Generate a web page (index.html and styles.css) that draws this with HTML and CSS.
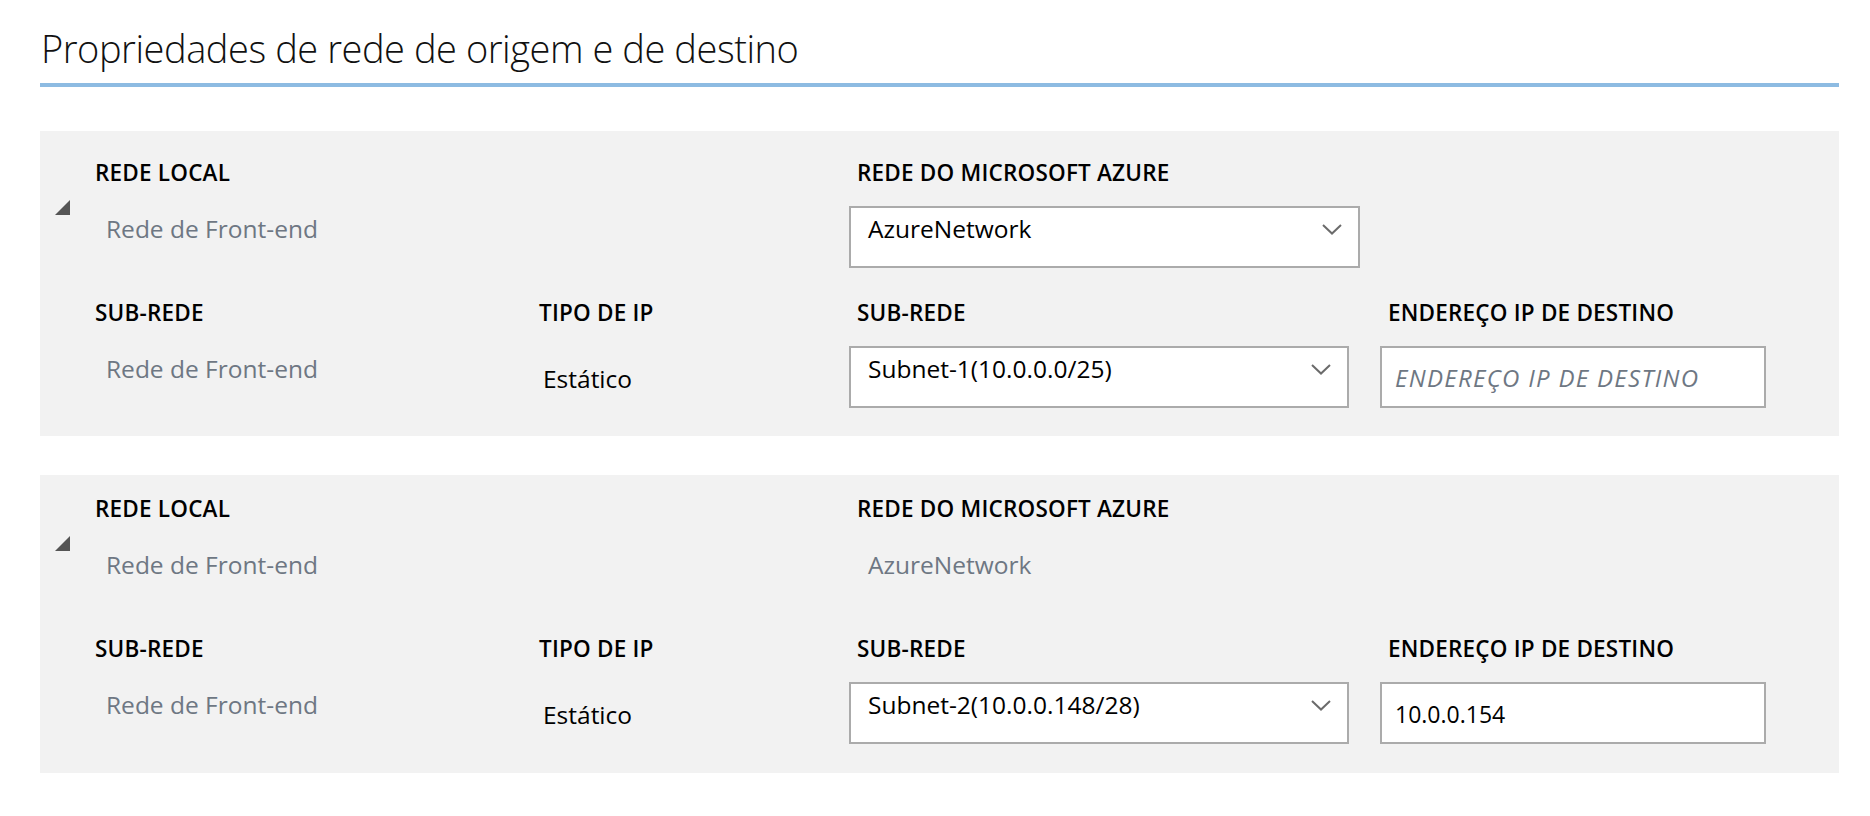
FILE: index.html
```html
<!DOCTYPE html>
<html lang="pt">
<head>
<meta charset="utf-8">
<title>Propriedades de rede</title>
<link rel="stylesheet" href="styles.css">
</head>
<body>
<div class="page">
  <h1 class="title">Propriedades de rede de origem e de destino</h1>
  <div class="rule"></div>

  <section class="panel panel-first">
    <div class="group">
      <div class="toggle"></div>
      <div class="label c1">REDE LOCAL</div>
      <div class="label c3 ind">REDE DO MICROSOFT AZURE</div>
      <div class="value c1 r2">Rede de Front-end</div>
      <div class="select wide c3 r2"><span>AzureNetwork</span><svg class="chev" width="20" height="11" viewBox="0 0 20 11"><polyline points="1,1 10,9.5 19,1" fill="none" stroke="#6b6b6b" stroke-width="2"/></svg></div>
    </div>
    <div class="group">
      <div class="label c1">SUB-REDE</div>
      <div class="label c2">TIPO DE IP</div>
      <div class="label c3 ind">SUB-REDE</div>
      <div class="label c4 ind">ENDEREÇO IP DE DESTINO</div>
      <div class="value c1 r2">Rede de Front-end</div>
      <div class="static c2 r2">Estático</div>
      <div class="select narrow c3 r2"><span>Subnet-1(10.0.0.0/25)</span><svg class="chev" width="20" height="11" viewBox="0 0 20 11"><polyline points="1,1 10,9.5 19,1" fill="none" stroke="#6b6b6b" stroke-width="2"/></svg></div>
      <div class="input c4 r2"><span class="placeholder">ENDEREÇO IP DE DESTINO</span></div>
    </div>
  </section>

  <section class="panel panel-second">
    <div class="group">
      <div class="toggle"></div>
      <div class="label c1">REDE LOCAL</div>
      <div class="label c3 ind">REDE DO MICROSOFT AZURE</div>
      <div class="value c1 r2">Rede de Front-end</div>
      <div class="value c3 r2 boxed">AzureNetwork</div>
    </div>
    <div class="group">
      <div class="label c1">SUB-REDE</div>
      <div class="label c2">TIPO DE IP</div>
      <div class="label c3 ind">SUB-REDE</div>
      <div class="label c4 ind">ENDEREÇO IP DE DESTINO</div>
      <div class="value c1 r2">Rede de Front-end</div>
      <div class="static c2 r2">Estático</div>
      <div class="select narrow c3 r2"><span>Subnet-2(10.0.0.148/28)</span><svg class="chev" width="20" height="11" viewBox="0 0 20 11"><polyline points="1,1 10,9.5 19,1" fill="none" stroke="#6b6b6b" stroke-width="2"/></svg></div>
      <div class="input c4 r2"><span class="filled">10.0.0.154</span></div>
    </div>
  </section>
</div>
</body>
</html>
```

FILE: styles.css
```css
html, body {
  margin: 0;
  padding: 0;
  background: #ffffff;
}

body {
  font-family: "Open Sans", "Noto Sans", "DejaVu Sans", sans-serif;
  color: #000000;
}

.page {
  padding: 0 31px 0 40px;
}

.title {
  margin: 0;
  padding: 24px 0 0 1px;
  font-size: 38px;
  font-weight: 300;
  line-height: 48px;
  color: #111111;
  letter-spacing: -0.45px;
}

.rule {
  margin-top: 11px;
  height: 4px;
  background: #8dbbe2;
}

.panel {
  background: #f2f2f2;
  padding-left: 15px;
  display: flex;
  flex-direction: column;
  gap: 30px;
}

.panel-first {
  margin-top: 44px;
  padding-top: 27px;
  padding-bottom: 28px;
}

.panel-second {
  margin-top: 39px;
  padding-top: 19px;
  padding-bottom: 29px;
}

.group {
  display: grid;
  grid-template-columns: 40px 444px 310px 531px 1fr;
  grid-template-rows: 30px 62px;
  row-gap: 18px;
}

.c1 { grid-column: 2; }
.c2 { grid-column: 3; }
.c3 { grid-column: 4; }
.c4 { grid-column: 5; }
.r2 { grid-row: 2; }

.toggle {
  grid-column: 1;
  grid-row: 1 / span 2;
  align-self: start;
  margin-top: 42px;
  width: 0;
  height: 0;
  border-left: 15px solid transparent;
  border-bottom: 15px solid #555555;
}

.label {
  grid-row: 1;
  font-size: 22.5px;
  font-weight: 600;
  line-height: 30px;
  letter-spacing: 0.2px;
  white-space: nowrap;
  color: #000000;
}

.label.ind {
  padding-left: 8px;
}

.value {
  padding: 8px 0 0 11px;
  font-size: 24.5px;
  line-height: 30px;
  color: #6e7783;
  white-space: nowrap;
}

.value.boxed {
  padding-left: 19px;
}

.static {
  padding: 18px 0 0 4px;
  font-size: 24.5px;
  line-height: 30px;
  color: #000000;
}

.select {
  box-sizing: border-box;
  height: 62px;
  border: 2px solid #ababab;
  background: #ffffff;
  padding: 6px 16px 0 17px;
  display: flex;
  justify-content: space-between;
  align-items: flex-start;
  font-size: 24.5px;
  line-height: 30px;
  color: #000000;
  white-space: nowrap;
}

.select.wide { width: 511px; }
.select.narrow { width: 500px; }

.chev {
  margin-top: 10px;
  flex: none;
}

.input {
  box-sizing: border-box;
  width: 386px;
  height: 62px;
  border: 2px solid #ababab;
  background: #ffffff;
  padding: 2px 13px 0 13px;
  display: flex;
  align-items: center;
  font-size: 23px;
  line-height: 30px;
  white-space: nowrap;
}

.placeholder {
  font-style: italic;
  font-size: 24px;
  letter-spacing: 1.3px;
  color: #6e7783;
}

.filled {
  color: #000000;
}
```
